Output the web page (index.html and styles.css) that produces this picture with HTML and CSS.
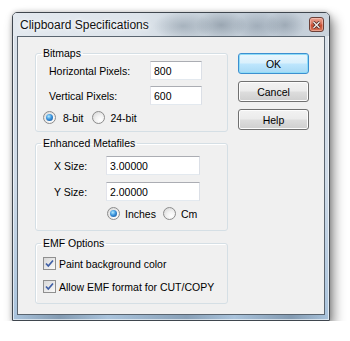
FILE: index.html
```html
<!DOCTYPE html>
<html lang="en">

<head>
    <meta charset="UTF-8">
    <title>Clipboard Specifications</title>
    <link rel="stylesheet" href="styles.css">
</head>

<body>
    <div class="window">
        <div class="titlebar">
            <span class="title">Clipboard Specifications</span>
            <button class="close-btn" aria-label="Close">
                <svg width="9" height="8" viewBox="0 0 9 8">
                    <path d="M1.5 1 L7.5 7 M7.5 1 L1.5 7" stroke="#4a2a24" stroke-width="3" />
                    <path d="M1.5 1 L7.5 7 M7.5 1 L1.5 7" stroke="#f4ecea" stroke-width="1.4" />
                </svg>
            </button>
        </div>

        <div class="client">
            <div class="groups">
                <fieldset class="group group-bitmaps">
                    <legend>Bitmaps</legend>
                    <div class="field-row">
                        <label class="field-label" for="hPixels">Horizontal Pixels:</label>
                        <input class="text-input" id="hPixels" type="text" value="800">
                    </div>
                    <div class="field-row">
                        <label class="field-label" for="vPixels">Vertical Pixels:</label>
                        <input class="text-input" id="vPixels" type="text" value="600">
                    </div>
                    <div class="option-row">
                        <label class="radio"><span class="radio-circle checked"></span>8-bit</label>
                        <label class="radio"><span class="radio-circle"></span>24-bit</label>
                    </div>
                </fieldset>

                <fieldset class="group group-metafiles">
                    <legend>Enhanced Metafiles</legend>
                    <div class="field-row">
                        <label class="field-label" for="xSize">X Size:</label>
                        <input class="text-input" id="xSize" type="text" value="3.00000">
                    </div>
                    <div class="field-row">
                        <label class="field-label" for="ySize">Y Size:</label>
                        <input class="text-input" id="ySize" type="text" value="2.00000">
                    </div>
                    <div class="option-row">
                        <label class="radio"><span class="radio-circle checked"></span>Inches</label>
                        <label class="radio"><span class="radio-circle"></span>Cm</label>
                    </div>
                </fieldset>

                <fieldset class="group group-emf">
                    <legend>EMF Options</legend>
                    <label class="check">
                        <span class="check-box">
                            <svg width="11" height="11" viewBox="0 0 11 11">
                                <path d="M2 5.5 L4.3 8 L9 2.5" fill="none" stroke="#3f5fa6" stroke-width="1.7" />
                            </svg>
                        </span>
                        Paint background color
                    </label>
                    <label class="check">
                        <span class="check-box">
                            <svg width="11" height="11" viewBox="0 0 11 11">
                                <path d="M2 5.5 L4.3 8 L9 2.5" fill="none" stroke="#3f5fa6" stroke-width="1.7" />
                            </svg>
                        </span>
                        Allow EMF format for CUT/COPY
                    </label>
                </fieldset>
            </div>

            <div class="buttons">
                <button class="btn btn-default">OK</button>
                <button class="btn">Cancel</button>
                <button class="btn">Help</button>
            </div>
        </div>
    </div>
</body>

</html>
```

FILE: styles.css
```css
:root {
    --frame-border: #3f464e;
    --client-bg: #f0f0f0;
    --group-border: #d5dfe5;
    --text-color: #000;
}

body {
    margin: 0;
    background: #fff;
    font-family: "Liberation Sans", Arial, sans-serif;
    font-size: 10.5px;
    color: var(--text-color);
}

/* window frame */
.window {
    margin: 12px 0 0 12px;
    width: 318px;
    height: 309px;
    box-sizing: border-box;
    display: flex;
    flex-direction: column;
    border: 1px solid var(--frame-border);
    border-radius: 5px 5px 0 0;
    background:
        linear-gradient(90deg, transparent 0%, rgba(60, 80, 100, 0.35) 15%, transparent 30%, rgba(60, 80, 100, 0.3) 55%, transparent 70%, rgba(60, 80, 100, 0.35) 88%, transparent 100%) bottom / 100% 5px no-repeat,
        linear-gradient(180deg, #dbe2ea 0%, #cfdbe8 55%, #a9c3dc 100%);
    box-shadow: inset 0 0 0 1px rgba(255, 255, 255, 0.6),
        4px 6px 12px rgba(0, 0, 0, 0.45),
        0 0 5px rgba(0, 0, 0, 0.2);
}

.titlebar {
    height: 23px;
    flex: none;
    display: flex;
    align-items: center;
    justify-content: space-between;
    padding: 0 5px 0 7px;
    border-radius: 4px 4px 0 0;
    background:
        radial-gradient(ellipse 30px 14px at 170px 13px, rgba(110, 125, 140, 0.4), transparent),
        radial-gradient(ellipse 26px 14px at 208px 12px, rgba(90, 105, 120, 0.4), transparent),
        radial-gradient(ellipse 24px 14px at 244px 13px, rgba(105, 120, 135, 0.35), transparent),
        radial-gradient(ellipse 20px 14px at 272px 12px, rgba(90, 105, 120, 0.35), transparent),
        linear-gradient(90deg, #e3e9ef 0%, #dde4eb 40%, #c7d1da 60%, #bfcad5 80%, #cbd4dd 100%);
}

.title {
    font-size: 12px;
    color: #111;
    text-shadow: 0 0 6px #fff, 0 0 3px #fff;
}

.close-btn {
    width: 15px;
    height: 15px;
    padding: 0;
    display: flex;
    align-items: center;
    justify-content: center;
    border: 1px solid #6b4038;
    border-radius: 3px;
    background: linear-gradient(180deg, #eaa392 0%, #d9715a 48%, #c6492f 52%, #d8765a 100%);
    box-shadow: inset 0 0 0 1px rgba(255, 220, 210, 0.45);
}

/* client area */
.client {
    flex: 1;
    display: flex;
    margin: 0 4px 5px;
    padding: 10px 0 0 17px;
    border: 1px solid #5a6570;
    background: var(--client-bg);
}

.groups {
    width: 193px;
}

.group {
    margin: 0;
    min-width: 0;
    border: 1px solid var(--group-border);
    border-radius: 3px;
    padding: 0 0 0 7px;
    box-shadow: inset 1px 1px 0 #fff;
}

.group legend {
    padding: 0 2px;
    margin-left: -2px;
    line-height: 12px;
}

.group-bitmaps {
    padding-top: 2px;
    padding-bottom: 7px;
}

.group-metafiles {
    margin-top: 5px;
    padding-top: 7px;
    padding-bottom: 10px;
}

.group-emf {
    margin-top: 6px;
    padding-top: 8px;
    padding-bottom: 10px;
}

.field-row {
    display: flex;
    align-items: center;
    height: 19px;
    padding-left: 6px;
}

.group-bitmaps .field-row + .field-row {
    margin-top: 6px;
}

.group-metafiles .field-row {
    padding-left: 11px;
}

.group-metafiles .field-row + .field-row {
    margin-top: 7px;
}

.group-bitmaps .field-label {
    width: 101px;
}

.group-metafiles .field-label {
    width: 52px;
}

.text-input {
    height: 19px;
    box-sizing: border-box;
    margin: 0;
    padding: 0 0 0 3px;
    border: 1px solid;
    border-color: #abadb3 #dbdfe6 #e3e9ef #e2e3ea;
    background: #fff;
    font: inherit;
    color: var(--text-color);
}

.group-bitmaps .text-input {
    width: 52px;
}

.group-metafiles .text-input {
    width: 94px;
}

/* radios */
.option-row {
    display: flex;
    align-items: center;
    height: 13px;
    margin-top: 6px;
    gap: 9px;
}

.group-metafiles .option-row {
    padding-left: 64px;
    gap: 7px;
}

.radio {
    display: flex;
    align-items: center;
    gap: 5px;
}

.group-bitmaps .radio:first-child {
    gap: 7px;
}

.radio-circle {
    width: 13px;
    height: 13px;
    box-sizing: border-box;
    position: relative;
    border: 1px solid #8c8c8c;
    border-radius: 50%;
    background: radial-gradient(circle at 65% 70%, #fff 0%, #f2f2f2 40%, #d2d2d2 100%);
}

.radio-circle.checked::after {
    content: '';
    position: absolute;
    left: 2px;
    top: 2px;
    width: 7px;
    height: 7px;
    border-radius: 50%;
    background: radial-gradient(circle at 40% 35%, #b4ecff 0%, #3a93dc 45%, #14498c 100%);
}

/* checkboxes */
.check {
    display: flex;
    align-items: center;
    height: 13px;
    gap: 3px;
}

.check + .check {
    margin-top: 10px;
}

.check-box {
    width: 13px;
    height: 13px;
    box-sizing: border-box;
    display: flex;
    align-items: center;
    justify-content: center;
    border: 1px solid #8f8f8f;
    background: linear-gradient(135deg, #d8d8d8 0%, #ececec 60%, #fafafa 100%);
}

/* buttons */
.buttons {
    display: flex;
    flex-direction: column;
    gap: 7px;
    margin: 6px 0 0 10px;
}

.btn {
    width: 71px;
    height: 21px;
    padding: 0;
    border: 1px solid #707070;
    border-radius: 3px;
    background: linear-gradient(180deg, #f2f2f2 0%, #ebebeb 48%, #dddddd 52%, #cfcfcf 100%);
    box-shadow: inset 0 0 0 1px #fcfcfc;
    font: inherit;
    color: var(--text-color);
    cursor: pointer;
}

.btn-default {
    border-color: #3c8fd0;
    background: linear-gradient(180deg, #eaf6fd 0%, #d9f0fc 48%, #bee6fd 52%, #a7d9f5 100%);
    box-shadow: inset 0 0 0 1px #8fdcf7;
}
```
